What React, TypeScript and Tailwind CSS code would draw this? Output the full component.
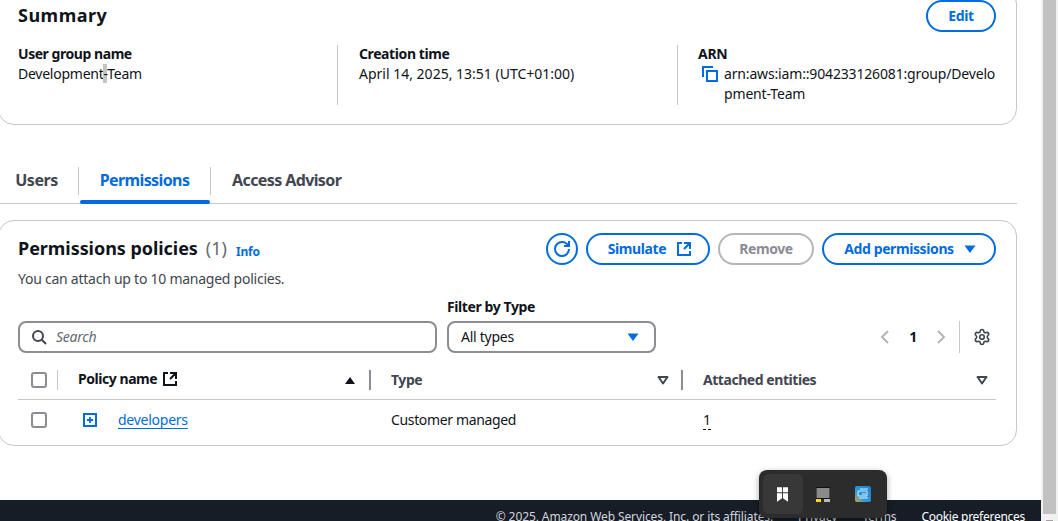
import React from "react";
import { Settings } from "lucide-react";

const Ext = ({ className }: { className?: string }) => (
  <svg viewBox="0 0 16 16" fill="none" stroke="currentColor" strokeWidth="2" className={className}>
    <path d="M14 8.01v-6H8M14.02 2 8 8.01M6 2.01H2v12h12v-3.99" strokeLinejoin="miter" />
  </svg>
);

const Caret = ({ className }: { className?: string }) => (
  <svg viewBox="0 0 16 16" className={className} fill="currentColor">
    <path d="M2.5 4.5h11L8 12z" />
  </svg>
);

const CaretUp = () => (
  <svg viewBox="0 0 16 16" className="h-4 w-4 text-[#0f141a]" fill="currentColor">
    <path d="M3 12h10L8 5z" />
  </svg>
);

const CaretOutline = () => (
  <svg viewBox="0 0 16 16" className="h-4 w-4 text-[#424650]" fill="none" stroke="currentColor" strokeWidth="2">
    <path d="M3.5 5h9L8 11.5z" strokeLinejoin="round" />
  </svg>
);

const Checkbox = () => <div className="h-4 w-4 rounded-[3px] border-2 border-[#8c8c94] bg-white" />;

export default function App() {
  return (
    <div className="flex h-[521px] w-[1058px] overflow-hidden bg-white font-['Noto_Sans',sans-serif] text-sm leading-5 tracking-[-0.25px] text-[#0f141a]">
      <div className="relative flex h-full w-[1041px] shrink-0 flex-col overflow-hidden">
        <section className="-ml-[2px] -mt-[12px] h-[137px] w-[1019px] shrink-0 rounded-2xl border border-[#c6c6cd] pl-[19px] pr-[20px] pt-[11px]">
          <div className="flex h-[32px] items-center justify-between">
            <h2 className="-mt-[2px] text-lg font-bold leading-6 tracking-[0.5px]">Summary</h2>
            <button className="h-[32px] w-[70px] rounded-full border-2 border-[#006ce0] text-sm font-bold tracking-[-0.4px] text-[#006ce0]">Edit</button>
          </div>
          <div className="mt-[13px] grid h-[60px] grid-cols-[319px_340px_1fr]">
            <div className="-mt-px">
              <div className="font-bold tracking-[-0.45px]">User group name</div>
              <div>Development<span className="bg-[#c4c4c4]">-</span>Team</div>
            </div>
            <div className="border-l border-[#c6c6cd] pl-[21px]">
              <div className="-mt-px font-bold tracking-[-0.4px]">Creation time</div>
              <div className="tracking-normal">April 14, 2025, 13:51 (UTC+01:00)</div>
            </div>
            <div className="border-l border-[#c6c6cd] pl-[20px]">
              <div className="-mt-px font-bold">ARN</div>
              <div className="flex">
                <svg viewBox="0 0 16 16" fill="none" stroke="#006ce0" strokeWidth="2" className="ml-[4px] mt-[2px] h-4 w-4 shrink-0">
                  <path d="M1 11V1h10" />
                  <rect x="5" y="5" width="10" height="10" />
                </svg>
                <div className="ml-[6px] w-[272px] break-all tracking-[-0.16px]">arn:aws:iam::904233126081:group/Development-Team</div>
              </div>
            </div>
          </div>
        </section>

        <nav className="-ml-[2px] mt-[42px] flex h-[37px] w-[1019px] shrink-0 items-start border-b border-[#c6c6cd] pl-[19px] text-base font-bold tracking-[-0.6px] text-[#424650]">
          <div className="flex h-[28px] w-[61px] -translate-y-px items-center justify-end pr-[20px] tracking-[-0.4px]">Users</div>
          <div className="h-[28px] w-px bg-[#c6c6cd]" />
          <div className="relative h-[28px] w-[131px]">
            <div className="flex h-[28px] -translate-y-px items-center justify-center text-[#006ce0]">Permissions</div>
            <div className="absolute left-[1px] right-0 top-[33px] h-[4px] rounded-sm bg-[#006ce0]" />
          </div>
          <div className="h-[28px] w-px bg-[#c6c6cd]" />
          <div className="flex h-[28px] -translate-y-px items-center pl-[21px]">Access Advisor</div>
        </nav>

        <section className="-ml-[2px] mt-[16px] h-[226px] w-[1019px] shrink-0 rounded-2xl border border-[#c6c6cd] pl-[19px] pr-[20px] pt-[12px]">
          <div className="flex h-[32px] items-center justify-between">
            <div className="flex items-baseline tracking-normal">
              <h2 className="-translate-y-px text-lg font-bold leading-6 tracking-[-0.05px]">Permissions policies</h2>
              <span className="ml-[8px] -translate-y-px text-lg leading-6 text-[#656871]">(1)</span>
              <span className="ml-[9px] text-xs font-bold tracking-[-0.2px] text-[#006ce0]">Info</span>
            </div>
            <div className="flex items-center gap-2 font-bold tracking-[-0.4px]">
              <button className="flex h-[32px] w-[32px] items-center justify-center rounded-full border-2 border-[#006ce0] text-[#006ce0]">
                <svg viewBox="0 0 16 16" fill="none" stroke="currentColor" strokeWidth="2" className="h-4 w-4">
                  <path d="M10 5h5V0" />
                  <path d="M15 8.01c0 3.87-3.13 7-7 7s-7-3.13-7-7 3.13-7 7-7c2.79 0 5.2 1.63 6.33 4" />
                </svg>
              </button>
              <button className="flex h-[32px] w-[124px] items-center justify-center gap-[10px] rounded-full border-2 border-[#006ce0] pl-[4px] text-[#006ce0]">
                Simulate
                <Ext className="h-4 w-4" />
              </button>
              <button className="h-[32px] w-[96px] rounded-full border-2 border-[#b4b4bb] text-[#8c8c94]">Remove</button>
              <button className="flex h-[32px] w-[174px] items-center justify-center gap-[8px] rounded-full border-2 border-[#006ce0] pl-[4px] text-[#006ce0]">
                Add permissions
                <Caret className="h-4 w-4" />
              </button>
            </div>
          </div>
          <p className="mt-[4px] text-[#424650]">You can attach up to 10 managed policies.</p>
          <div className="mt-[8px] flex items-end">
            <div className="flex h-[32px] w-[419px] items-center gap-[9px] rounded-lg border-2 border-[#8c8c94] px-[11px] text-[#656871]">
              <svg viewBox="0 0 16 16" fill="none" stroke="#424650" strokeWidth="2" className="h-4 w-4 shrink-0">
                <circle cx="7" cy="7" r="5" />
                <path d="m15 15-4.5-4.5" />
              </svg>
              <span className="italic">Search</span>
            </div>
            <div className="ml-[10px] w-[209px]">
              <div className="mb-[4px] font-bold tracking-[-0.4px]">Filter by Type</div>
              <div className="flex h-[32px] items-center justify-between rounded-lg border-2 border-[#8c8c94] pl-[12px] pr-[13px]">
                All types
                <Caret className="h-4 w-4 text-[#006ce0]" />
              </div>
            </div>
            <div className="ml-auto flex h-[32px] items-center pr-[5px]">
              <svg viewBox="0 0 16 16" fill="none" stroke="#b4b4bb" strokeWidth="2" className="h-4 w-4"><path d="m11 2-6 6 6 6" /></svg>
              <span className="mx-[16px] font-bold">1</span>
              <svg viewBox="0 0 16 16" fill="none" stroke="#b4b4bb" strokeWidth="2" className="h-4 w-4"><path d="m5 2 6 6-6 6" /></svg>
              <div className="ml-[10px] h-[32px] w-px bg-[#c6c6cd]" />
              <Settings className="ml-[13px] h-[18px] w-[18px] text-[#424650]" strokeWidth={2.2} />
            </div>
          </div>
          <div className="mt-[7px] grid h-[40px] grid-cols-[40px_313px_312px_313px] items-center border-b border-[#c6c6cd] font-bold tracking-[-0.45px]">
            <div className="flex items-center pl-[13px]">
              <Checkbox />
              <div className="ml-[10px] h-[20px] w-px bg-[#c6c6cd]" />
            </div>
            <div className="flex items-center justify-between pl-[20px]">
              <span className="flex -translate-y-px items-center gap-[5px]">Policy name <Ext className="h-4 w-4" /></span>
              <div className="flex items-center gap-[11px]">
                <CaretUp />
                <div className="h-[20px] w-[2px] bg-[#8c8c94]" />
              </div>
            </div>
            <div className="flex items-center justify-between pl-[20px] text-[#424650]">
              Type
              <div className="flex items-center gap-[10px]">
                <CaretOutline />
                <div className="h-[20px] w-[2px] bg-[#8c8c94]" />
              </div>
            </div>
            <div className="flex items-center justify-between pl-[20px] pr-[6px] text-[#424650]">
              Attached entities
              <CaretOutline />
            </div>
          </div>
          <div className="grid h-[40px] grid-cols-[40px_313px_312px_313px] items-center">
            <div className="pl-[13px]"><Checkbox /></div>
            <div className="flex items-center pl-[25px]">
              <svg viewBox="0 0 14 14" className="h-[14px] w-[14px]" fill="none" stroke="#006ce0" strokeWidth="2">
                <rect x="1" y="1" width="12" height="12" />
                <path d="M7 4v6M4 7h6" strokeWidth="1.8" />
              </svg>
              <a className="ml-[21px] text-[#006ce0] underline underline-offset-[3px]">developers</a>
            </div>
            <div className="pl-[20px] tracking-[-0.35px]">Customer managed</div>
            <div className="pl-[20px]"><span className="border-b border-dashed border-[#0f141a] leading-[17px]">1</span></div>
          </div>
        </section>

        <footer className="mt-auto flex h-[21px] shrink-0 items-start justify-end gap-[25px] bg-[#161d26] pr-[16px] pt-[9px] text-xs leading-4 tracking-[-0.1px] text-[#d1d5db]">
          <span>© 2025, Amazon Web Services, Inc. or its affiliates.</span>
          <span>Privacy</span>
          <span>Terms</span>
          <span className="tracking-[-0.27px] text-white">Cookie preferences</span>
        </footer>

        <div className="absolute left-[759px] top-[470px] flex h-[48px] w-[128px] items-center rounded-[8px] bg-[#2c2c2c] pl-[4px] shadow-[0_2px_6px_rgba(0,0,0,0.35)]">
          <div className="flex h-[40px] w-[40px] items-center justify-center rounded-md bg-[#383838]">
            <svg viewBox="0 0 12 16" className="-ml-px h-[15px] w-[11px]" fill="#fff">
              <path d="M0 0h5.5v5.5H0zM6.5 0H12v5.5H6.5zM0 6.5h5.5V12L0 16zM6.5 6.5H12V16l-5.5-4z" />
            </svg>
          </div>
          <svg viewBox="0 0 14 15" className="ml-[13px] h-[15px] w-[14px]">
            <rect x="0" y="0.5" width="14" height="11" fill="#8a8a8a" stroke="#111" />
            <rect x="0" y="12" width="5" height="3" fill="#ffe000" />
            <rect x="8" y="12" width="6" height="3" fill="#bbb" />
          </svg>
          <svg viewBox="0 0 16 16" className="ml-[25px] h-[16px] w-[16px]">
            <defs>
              <linearGradient id="g" x1="0" y1="1" x2="1" y2="0">
                <stop offset="0" stopColor="#d9a23a" />
                <stop offset="0.35" stopColor="#2f9bd8" />
                <stop offset="1" stopColor="#1f7fd0" />
              </linearGradient>
            </defs>
            <rect width="16" height="16" rx="2" fill="url(#g)" />
            <path d="M3 10V5h9v5zM5 3h8M7 8h4M4 12h9" stroke="#d7f0ff" strokeWidth="1" fill="none" />
          </svg>
        </div>
      </div>
      <div className="flex h-full w-[17px] shrink-0 flex-col items-center bg-[#f1f1f1]">
        <div className="h-[514px] w-[13px] shrink-0 bg-[#c1c1c1]" />
        <div className="mt-[6px] h-px w-[7px] shrink-0 bg-[#a3a3a3]" />
      </div>
    </div>
  );
}
